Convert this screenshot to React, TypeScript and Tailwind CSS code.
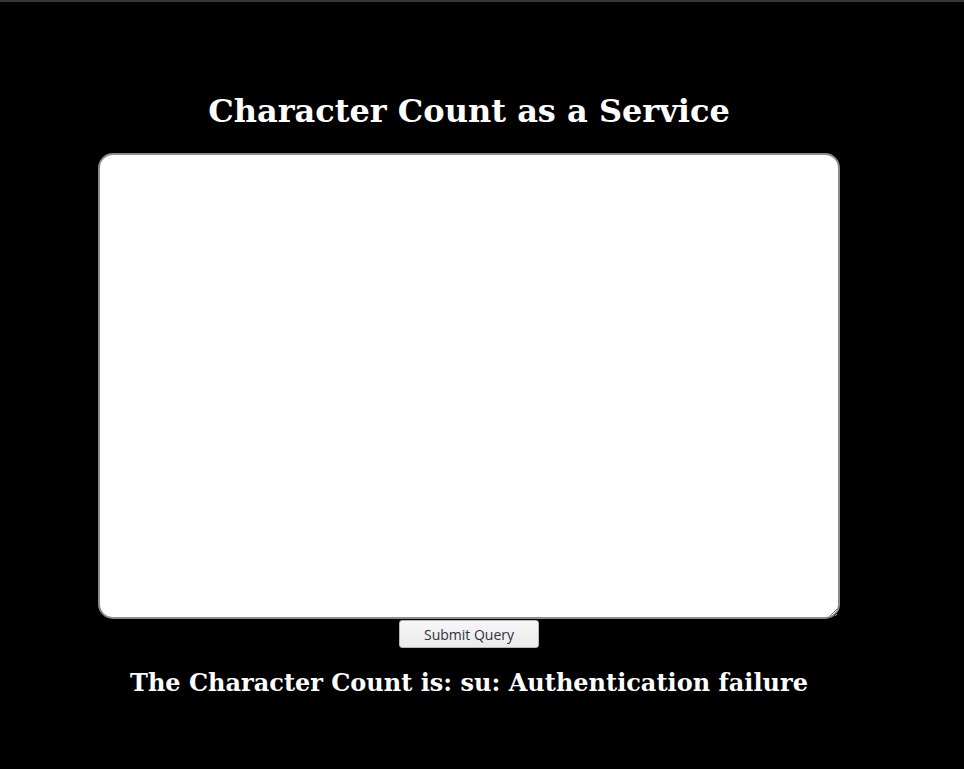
export default function App() {
  return (
    <div className="min-h-[769px] w-full border-t-2 border-[#33363b] bg-black font-['DejaVu_Serif',serif]">
      <div className="flex w-[938px] flex-col items-center">
        <h1 className="mt-[90px] text-[32px] leading-[38px] font-bold text-white">
          Character Count as a Service
        </h1>
        <textarea
          className="mt-[23px] block h-[466px] w-[742px] rounded-[15px] border-2 border-[#8c8c8c] bg-white p-2 text-black outline-none"
          defaultValue=""
        />
        <button
          type="button"
          className="mt-[1px] h-[28px] w-[140px] rounded-[3px] border border-[#b5b5b5] bg-gradient-to-b from-[#f7f7f7] to-[#e9e9e9] font-['Open_Sans',sans-serif] text-[14px] text-[#2c3440]"
        >
          Submit Query
        </button>
        <p className="mt-[20px] text-[24px] leading-[30px] font-bold text-white">
          The Character Count is: su: Authentication failure
        </p>
      </div>
    </div>
  );
}
